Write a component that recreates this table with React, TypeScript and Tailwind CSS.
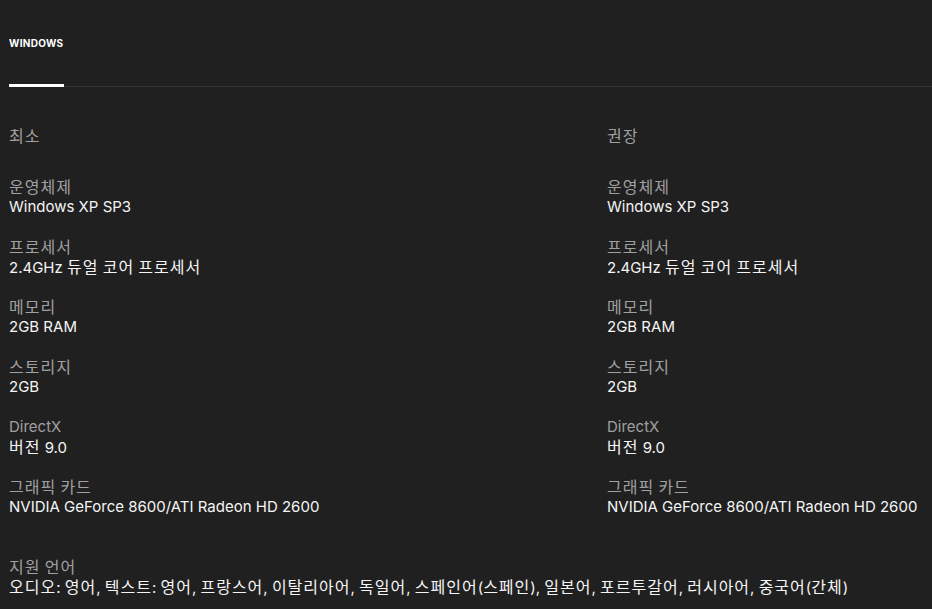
const specs = [
  { label: "운영체제", value: "Windows XP SP3" },
  { label: "프로세서", value: "2.4GHz 듀얼 코어 프로세서" },
  { label: "메모리", value: "2GB RAM" },
  { label: "스토리지", value: "2GB" },
  { label: "DirectX", value: "버전 9.0" },
  { label: "그래픽 카드", value: "NVIDIA GeForce 8600/ATI Radeon HD 2600" },
];

// hangul runs are rendered a bit larger and looser than the latin text
function Txt({ text }: { text: string }) {
  const parts = text.split(/([\uAC00-\uD7A3]+)/);
  return (
    <>
      {parts.map((p, i) =>
        /[\uAC00-\uD7A3]/.test(p) ? (
          <span key={i} className="text-[16px] leading-5 tracking-[1px]">
            {p}
          </span>
        ) : (
          <span key={i}>{p}</span>
        ),
      )}
    </>
  );
}

function Column({ title }: { title: string }) {
  return (
    <div className="flex flex-col">
      <div className="text-[#a0a0a0] leading-5">
        <Txt text={title} />
      </div>
      <div className="mt-[30px] flex flex-col gap-5">
        {specs.map((s) => (
          <div key={s.label} className="flex flex-col leading-5">
            <span className="h-5 text-[#a0a0a0]">
              <Txt text={s.label} />
            </span>
            <span className="h-5 whitespace-nowrap text-[#f5f5f5]">
              <Txt text={s.value} />
            </span>
          </div>
        ))}
      </div>
    </div>
  );
}

export default function App() {
  return (
    <div
      className="min-h-[609px] overflow-hidden bg-[#202020] pl-[9px] text-[15px]"
      style={{ fontFamily: '"Inter", "Noto Sans CJK KR", sans-serif' }}
    >
      <div className="flex h-[87px] border-b border-[#333333]">
        <div className="-mb-px flex w-[55px] items-center border-b-[3px] border-white pt-[2px]">
          <span className="text-[10px] font-bold tracking-[0.03em] text-white">
            WINDOWS
          </span>
        </div>
      </div>
      <div className="mt-[39px] grid grid-cols-[598px_1fr]">
        <Column title="최소" />
        <Column title="권장" />
      </div>
      <div className="mt-10 flex flex-col leading-5">
        <span className="h-5 text-[#a0a0a0]">
          <Txt text="지원 언어" />
        </span>
        <span className="h-5 whitespace-nowrap text-[#f5f5f5]">
          <Txt text="오디오: 영어, 텍스트: 영어, 프랑스어, 이탈리아어, 독일어, 스페인어(스페인), 일본어, 포르투갈어, 러시아어, 중국어(간체)" />
        </span>
      </div>
    </div>
  );
}
